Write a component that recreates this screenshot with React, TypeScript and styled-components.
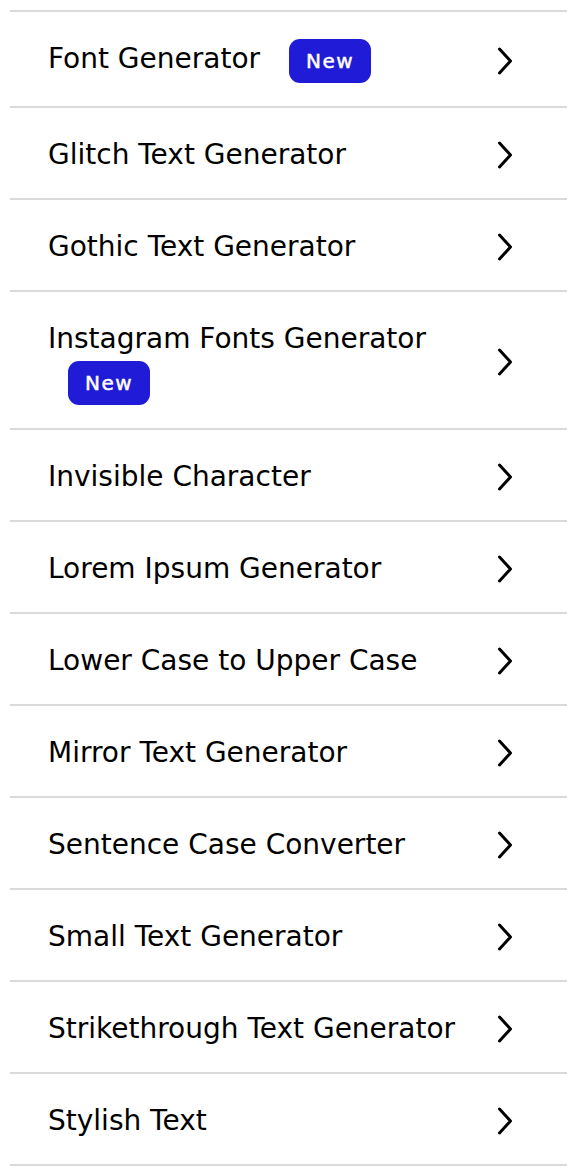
import styled, { createGlobalStyle } from "styled-components";

const GlobalStyle = createGlobalStyle`
  body {
    margin: 0;
    background: #ffffff;
    font-family: "DejaVu Sans", Verdana, sans-serif;
    color: #000000;
  }
`;

const List = styled.ul`
  list-style: none;
  margin: 10px 7px 0 10px;
  padding: 0;
  border-top: 2px solid #dadada;
`;

const Row = styled.li`
  display: flex;
  align-items: center;
  gap: 20px;
  padding: 26px 54px 22px 38px;
  border-bottom: 2px solid #dadada;
  cursor: pointer;
`;

const Label = styled.span`
  flex: 1;
  font-size: 28px;
  line-height: 42px;
`;

const Badge = styled.span`
  display: inline-block;
  margin: 0 0 1px 20px;
  padding: 10px 17px;
  border-radius: 11px;
  background: #201bd6;
  color: #ffffff;
  font-size: 20px;
  font-weight: 400;
  letter-spacing: 1.5px;
  -webkit-text-stroke: 0.5px #ffffff;
  line-height: 24px;
  vertical-align: 0;
`;

const Chevron = () => (
  <svg width="16" height="28" viewBox="0 0 16 28" fill="none">
    <polyline
      points="2.5,2 13.5,14 2.5,26"
      stroke="#000"
      strokeWidth="3"
      strokeLinecap="round"
      strokeLinejoin="round"
    />
  </svg>
);

const tools: { name: string; isNew?: boolean }[] = [
  { name: "Font Generator", isNew: true },
  { name: "Glitch Text Generator" },
  { name: "Gothic Text Generator" },
  { name: "Instagram Fonts Generator", isNew: true },
  { name: "Invisible Character" },
  { name: "Lorem Ipsum Generator" },
  { name: "Lower Case to Upper Case" },
  { name: "Mirror Text Generator" },
  { name: "Sentence Case Converter" },
  { name: "Small Text Generator" },
  { name: "Strikethrough Text Generator" },
  { name: "Stylish Text" },
];

export default function App() {
  return (
    <>
      <GlobalStyle />
      <List>
        {tools.map((tool) => (
          <Row key={tool.name}>
            <Label>
              {tool.name} {tool.isNew && <Badge>New</Badge>}
            </Label>
            <Chevron />
          </Row>
        ))}
      </List>
    </>
  );
}
